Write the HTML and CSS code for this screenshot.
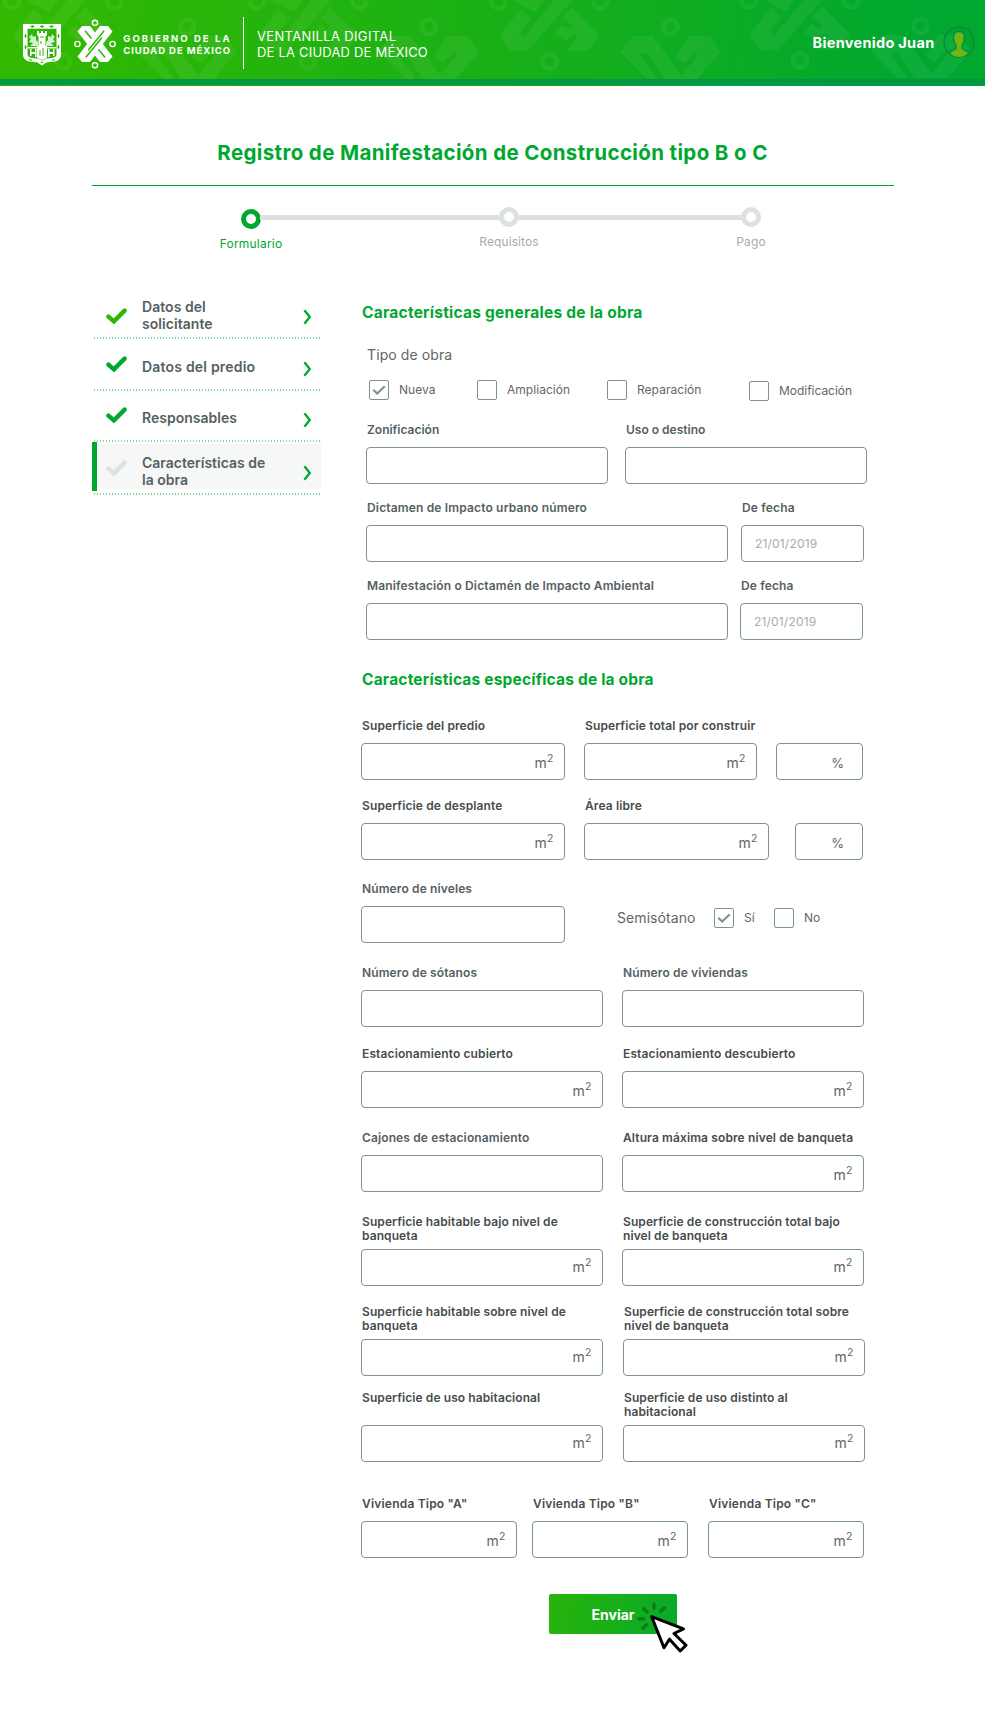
FILE: index.html
```
<!DOCTYPE html>
<html lang="es">
<head>
<meta charset="utf-8">
<title>Registro de Manifestación de Construcción tipo B o C</title>
<link rel="stylesheet" href="styles.css">
</head>
<body>
<svg class="defs" width="0" height="0" aria-hidden="true">
  <defs>
    <mask id="weave" maskUnits="userSpaceOnUse" x="-24" y="-26" width="48" height="52">
      <rect x="-24" y="-26" width="48" height="52" fill="#fff"/>
      <g stroke="#000" stroke-width="1.6" stroke-linecap="round" fill="none">
        <path d="M8.7-12.800-6.400 5.800"/>
        <path d="M-8.700 12.800 6.400-5.800"/>
        <path d="M-9.500-12.800-3.800-5.800"/>
        <path d="M9.500 12.800 3.800 5.800"/>
      </g>
    </mask>
    <symbol id="cdmx" viewBox="-24 -26 48 52" overflow="visible">
      <path mask="url(#weave)" fill="currentColor" d="M-13-18h8L0-11.500 5-18h8l4.500 5.500L7.800 0l9.700 12.500L13 18H5L0 11.500-5 18h-8l-4.500-5.500L-7.800 0l-9.700-12.500z"/>
      <g fill="none" stroke="currentColor" stroke-width="1.400">
        <circle cy="-21.200" r="2.600"/><circle cy="21.200" r="2.600"/><circle cx="-17.600" r="2.600"/><circle cx="17.600" r="2.600"/>
      </g>
    </symbol>
    <g id="motif-top">
      <path d="M-50 35-29 9-19 19-29 31Q-31 38-24 35L4 0H23L-22 51H-40z"/>
      <path d="M-38 0-14 12-5 0z"/>
      <path d="M22 7 50 35 38 51H17L27 40Q29 33 23 35L17 41 4 34 12 25 20 30 23 26 13 18z"/>
      <g fill="none" stroke="#fff" stroke-width="4.500">
        <circle cx="-51" cy="1" r="7.200"/><circle cx="51" cy="1" r="7.200"/><circle cy="61.500" r="7.200"/>
      </g>
    </g>
    <g id="motif-bottom">
      <path d="M-38 36H-18L14 79H-6L-22 55Q-26 50-30 56L-14 77-16 79H-23L-50 52z"/>
      <path d="M18 36H39L50 52 27 79H8L26 57Q28 51 23 54L14 63 5 57z"/>
      <circle cy="27" r="7.200" fill="none" stroke="#fff" stroke-width="4.500"/>
    </g>
    <symbol id="tick" viewBox="0 0 21 16">
      <path d="M2.400 8.600 7.900 13.400 18.600 2.600" fill="none" stroke="currentColor" stroke-width="4.400" stroke-linecap="round" stroke-linejoin="miter"/>
    </symbol>
    <symbol id="chevron" viewBox="0 0 9 16">
      <path d="M1.400 1.200 6.800 8 1.400 14.800" fill="none" stroke="currentColor" stroke-width="2.300"/>
    </symbol>
  </defs>
</svg>

<header class="header">
  <svg class="pattern" width="985" height="86" aria-hidden="true">
    <g class="motifs">
      <use href="#motif-top" x="63"/>
      <use href="#motif-top" x="308"/>
      <use href="#motif-top" x="549.500"/>
      <use href="#motif-top" x="800" y="-1"/>
      <use href="#motif-bottom" x="187"/>
      <use href="#motif-bottom" x="429"/>
      <use href="#motif-bottom" x="670.500"/>
      <use href="#motif-bottom" x="920.500" y="-1"/>
    </g>
  </svg>
  <svg class="shield" width="38" height="42" viewBox="0 0 38 42">
    <path d="M0 0h38v31q0 5-6 6.400l-8 .8L19 41.500 14 38.200l-8-.8Q0 36 0 31z" fill="#fff"/>
    <path d="M4.500 4.800h29V30q0 3.200-3.500 3.800l-7 .9-4 1.800-4-1.800-7-.9Q4.500 33.200 4.500 30z" fill="#2fb505"/>
    <g fill="#fff">
      <path d="M14 7h2v2h2V7h2v2h2V7h2v4l-1.500 1.500V22H24v12l-5 2-5-2V22h1.500v-9.500L14 11z"/>
      <path d="M6 13l3-3 1 3 3-1v4l2 2v4H7l3-3-4-1 2-3zM32 13l-3-3-1 3-3-1v4l-2 2v4h8l-3-3 4-1-2-3z" opacity=".8"/>
      <path d="M5 23h9v1.500H5zM24 23h9v1.500h-9zM7 25h1.500v3H12v-3h1.500v8H12v-3H8.500v2H7zM25 25h1.500v3H30v-3h1.500v7H30v-2h-3.500v3H25z"/>
    </g>
    <g stroke="#2fb505" fill="none" stroke-width="1">
      <path d="M7.500 2.500h4M17 2.500h4M26.500 2.500h4M2.500 10v4M2.500 21v4M35.500 10v4M35.500 21v4M6 35.500l3 .8M17.500 38.200h3M29 36.300l3-.8M17 13h4M18 17v3M20 24v8M17 26v6"/>
    </g>
    <g fill="#2fb505"><circle cx="9.500" cy="2.500" r="1.200"/><circle cx="19" cy="2.500" r="1.200"/><circle cx="28.500" cy="2.500" r="1.200"/><circle cx="2.500" cy="12" r="1.100"/><circle cx="35.500" cy="12" r="1.100"/><circle cx="2.500" cy="23" r="1.100"/><circle cx="35.500" cy="23" r="1.100"/></g>
  </svg>
  <svg class="emblem" width="48" height="52"><use href="#cdmx" width="48" height="52"/></svg>
  <div class="gov"><div class="gov-a">GOBIERNO DE LA</div><div class="gov-b">CIUDAD DE MÉXICO</div></div>
  <div class="divider"></div>
  <div class="product"><div class="product-a">VENTANILLA DIGITAL</div><div class="product-b">DE LA CIUDAD DE MÉXICO</div></div>
  <div class="welcome">Bienvenido Juan</div>
  <svg class="avatar" width="32" height="32" viewBox="0 0 32 32">
    <circle cx="16" cy="16" r="15" fill="none" stroke="#078c3c" stroke-width="1.500"/>
    <path d="M16 5c-4.500 0-6 2.500-5.500 7 0 3 .5 5 2.200 7v3.500L6.500 25.500M16 5c4.500 0 6 2.500 5.500 7 0 3-.5 5-2.200 7v3.500l6.200 3" fill="none" stroke="#078c3c" stroke-width="1.300"/>
    <path d="M16 6.500c-4 0-5 1.800-4.500 6 .2 3.200.8 4.500 2.200 6v4.500l-6.500 4.500q4 3.500 8.800 3.500t8.800-3.500L18.300 23v-4.500c1.400-1.500 2-2.800 2.200-6 .5-4.200-.5-6-4.500-6z" fill="#6fb516"/>
  </svg>
</header>

<main class="page">
  <h1 class="title">Registro de Manifestación de Construcción tipo B o C</h1>

  <div class="steps">
    <div class="step step-on"><span class="dot"></span><span class="step-name">Formulario</span></div>
    <div class="bar bar-a"></div>
    <div class="step"><span class="dot"></span><span class="step-name">Requisitos</span></div>
    <div class="bar bar-b"></div>
    <div class="step"><span class="dot"></span><span class="step-name">Pago</span></div>
  </div>

  <div class="columns">
    <nav class="side">
      <a class="item item-1"><svg class="tick" width="21" height="16"><use href="#tick"/></svg><span>Datos del<br>solicitante</span><svg class="chev" width="9" height="16"><use href="#chevron"/></svg></a>
      <a class="item item-2"><svg class="tick" width="21" height="16"><use href="#tick"/></svg><span>Datos del predio</span><svg class="chev" width="9" height="16"><use href="#chevron"/></svg></a>
      <a class="item item-3"><svg class="tick" width="21" height="16"><use href="#tick"/></svg><span>Responsables</span><svg class="chev" width="9" height="16"><use href="#chevron"/></svg></a>
      <a class="item item-4"><svg class="tick" width="21" height="16"><use href="#tick"/></svg><span>Características de<br>la obra</span><svg class="chev" width="9" height="16"><use href="#chevron"/></svg></a>
    </nav>

    <form class="form">
      <h2 class="heading">Características generales de la obra</h2>
      <section class="general">
        <div class="legend">Tipo de obra</div>
        <div class="checks">
          <div class="check"><span class="box"><svg width="14" height="10" viewBox="0 0 14 10"><path d="M1.200 4.800 5.200 8.500 12.800 1.200" fill="none" stroke="#7b9492" stroke-width="2.100"/></svg></span>Nueva</div>
          <div class="check"><span class="box"></span>Ampliación</div>
          <div class="check"><span class="box"></span>Reparación</div>
          <div class="check check-low"><span class="box"></span>Modificación</div>
        </div>
        <div class="row c-halves">
          <div class="field"><label>Zonificación</label><div class="input"></div></div>
          <div class="field"><label>Uso o destino</label><div class="input"></div></div>
        </div>
        <div class="row c-date-a">
          <div class="field"><label>Dictamen de Impacto urbano número</label><div class="input"></div></div>
          <div class="field"><label>De fecha</label><div class="input date">21/01/2019</div></div>
        </div>
        <div class="row c-date-b">
          <div class="field"><label>Manifestación o Dictamén de Impacto Ambiental</label><div class="input"></div></div>
          <div class="field"><label>De fecha</label><div class="input date">21/01/2019</div></div>
        </div>
      </section>

      <h2 class="heading heading-2">Características específicas de la obra</h2>
      <section class="specific">
        <div class="row dark c-built">
          <div class="field"><label>Superficie del predio</label><div class="input unit">m<sup>2</sup></div></div>
          <div class="field"><label>Superficie total por construir</label><div class="input unit">m<sup>2</sup></div></div>
          <div class="field end"><div class="input pct">%</div></div>
        </div>
        <div class="row dark c-free">
          <div class="field"><label>Superficie de desplante</label><div class="input unit">m<sup>2</sup></div></div>
          <div class="field"><label>Área libre</label><div class="input unit">m<sup>2</sup></div></div>
          <div class="field end"><div class="input pct">%</div></div>
        </div>
        <div class="row c-levels">
          <div class="field"><label>Número de niveles</label><div class="input"></div></div>
          <div class="semi">
            <span class="semi-name">Semisótano</span>
            <div class="check"><span class="box"><svg width="14" height="10" viewBox="0 0 14 10"><path d="M1.200 4.800 5.200 8.500 12.800 1.200" fill="none" stroke="#7b9492" stroke-width="2.100"/></svg></span>Sí</div>
            <div class="check"><span class="box"></span>No</div>
          </div>
        </div>
        <div class="row c-pair gap-23">
          <div class="field"><label>Número de sótanos</label><div class="input"></div></div>
          <div class="field"><label>Número de viviendas</label><div class="input"></div></div>
        </div>
        <div class="row dark c-pair gap-20">
          <div class="field"><label>Estacionamiento cubierto</label><div class="input unit">m<sup>2</sup></div></div>
          <div class="field"><label>Estacionamiento descubierto</label><div class="input unit">m<sup>2</sup></div></div>
        </div>
        <div class="row c-pair gap-23">
          <div class="field"><label>Cajones de estacionamiento</label><div class="input"></div></div>
          <div class="field dark"><label>Altura máxima sobre nivel de banqueta</label><div class="input unit">m<sup>2</sup></div></div>
        </div>
        <div class="row dark tall c-pair gap-23">
          <div class="field"><label>Superficie habitable bajo nivel de<br>banqueta</label><div class="input unit">m<sup>2</sup></div></div>
          <div class="field"><label>Superficie de construcción total bajo<br>nivel de banqueta</label><div class="input unit">m<sup>2</sup></div></div>
        </div>
        <div class="row dark tall c-pair-wide gap-19">
          <div class="field"><label>Superficie habitable sobre nivel de<br>banqueta</label><div class="input unit">m<sup>2</sup></div></div>
          <div class="field"><label>Superficie de construcción total sobre<br>nivel de banqueta</label><div class="input unit">m<sup>2</sup></div></div>
        </div>
        <div class="row dark tall c-pair-wide gap-15">
          <div class="field"><label>Superficie de uso habitacional</label><div class="input unit">m<sup>2</sup></div></div>
          <div class="field"><label>Superficie de uso distinto al<br>habitacional</label><div class="input unit">m<sup>2</sup></div></div>
        </div>
        <div class="row dark c-triple">
          <div class="field"><label>Vivienda Tipo "A"</label><div class="input unit">m<sup>2</sup></div></div>
          <div class="field"><label>Vivienda Tipo "B"</label><div class="input unit">m<sup>2</sup></div></div>
          <div class="field"><label>Vivienda Tipo "C"</label><div class="input unit">m<sup>2</sup></div></div>
        </div>
      </section>

      <button class="send" type="button">Enviar
        <svg class="cursor" width="52" height="54" viewBox="0 0 52 54">
          <g stroke="#0b7c19" stroke-width="3.400" stroke-linecap="round">
            <path d="M17 5v4.500M6.700 9.700 10 13M27.500 8.700 23.700 12.300M1.900 19.700H6.500M9.500 25.800 5.700 29.400"/>
          </g>
          <path d="M14.600 17.600 46.500 29.800 37 34.500 49 46.200 43.200 52 32.500 40.200 27 48.800z" fill="#fff" stroke="#000" stroke-width="3" stroke-linejoin="round"/>
        </svg>
      </button>
    </form>
  </div>
</main>
</body>
</html>
```

FILE: styles.css
```
* { box-sizing: border-box; }
body {
  margin: 0;
  width: 985px;
  min-height: 1731px;
  background: #fff;
  font-family: "Inter", "Open Sans", sans-serif;
  color: #535b5b;
}
.defs { position: absolute; }

/* Header */
.header {
  position: relative;
  display: flex;
  align-items: flex-start;
  height: 86px;
  background: linear-gradient(100deg, #33b900 0%, #19b016 50%, #00a82f 92%);
  color: #fff;
  overflow: hidden;
}
.header::after {
  content: "";
  position: absolute;
  left: 0; right: 0; top: 79px;
  height: 6px;
  background: #009845;
}
.pattern { position: absolute; left: 0; top: 0; }
.motifs { fill: #fff; opacity: .055; }
.shield, .emblem, .gov, .divider, .product, .welcome, .avatar { position: relative; flex: none; }
.shield { margin: 24px 0 0 23px; }
.emblem { margin: 18px 0 0 9.700px; overflow: visible; }
.gov { margin: 32.500px 0 0 4.600px; width: 119.700px; font-weight: 700; font-size: 9.500px; line-height: 12.400px; white-space: nowrap; }
.gov-a { letter-spacing: 2.050px; }
.gov-b { letter-spacing: .93px; }
.divider { margin-top: 17px; width: 1px; height: 52px; background: #fff; }
.product { margin: 28px 0 0 13px; font-weight: 400; font-size: 13px; line-height: 16px; white-space: nowrap; }
.product-a { letter-spacing: .35px; }
.product-b { letter-spacing: .2px; }
.welcome { margin: 34px 8.500px 0 auto; font-weight: 700; font-size: 14.500px; line-height: 18px; letter-spacing: .3px; }
.avatar { margin: 26px 10px 0 0; }

/* Title */
.title {
  margin: 0 0 0 92px;
  padding-top: 54px;
  width: 802px;
  height: 100px;
  border-bottom: 1px solid #00a82f;
  text-align: center;
  font-size: 20.500px;
  font-weight: 700;
  line-height: 26px;
  letter-spacing: .37px;
  text-indent: -1px;
  color: #00a82f;
}

/* Progress */
.steps { display: flex; margin: 21px 0 0 241px; height: 79px; }
.step { display: flex; flex-direction: column; align-items: center; width: 20px; color: #a4adad; font-size: 12px; font-weight: 400; line-height: 16px; letter-spacing: .1px; }
.dot { flex: none; width: 20px; height: 20px; border: 5px solid #dde1e1; border-radius: 50%; }
.step-name { margin-top: 7px; white-space: nowrap; }
.step-on { padding-top: 2px; color: #00a82f; font-weight: 400; letter-spacing: .2px; }
.step-on .dot { border-color: #00a82f; }
.bar { height: 5px; margin: 8px -1px 0; background: #dde1e1; }
.bar-a { width: 240px; }
.bar-b { width: 224px; }

/* Side navigation */
.columns { display: flex; }
.side { margin-left: 92px; width: 229px; }
.item {
  display: grid;
  grid-template-columns: 36px 161px 9px;
  align-items: start;
  padding-left: 14px;
  font-size: 14px;
  font-weight: 600;
  line-height: 17px;
  letter-spacing: .2px;
  color: #56605f;
  background: repeating-linear-gradient(90deg, #7fd696 0 1.500px, transparent 1.500px 3px) 2px 100% / 227px 2px no-repeat;
}
.item span { margin-top: -1px; }
.tick { color: #00a82f; }
.chev { color: #00a82f; }
.item-1 { height: 53px; letter-spacing: .05px; }
.item-1 span { padding-top: 12.500px; }
.item-1 .tick { margin-top: 22px; color: #2fb800; }
.item-1 .chev { margin-top: 23px; }
.item-2 { height: 52px; }
.item-2 span { padding-top: 19.500px; }
.item-2 .tick { margin-top: 17px; }
.item-2 .chev { margin-top: 22px; }
.item-3 { height: 51px; letter-spacing: 0; }
.item-3 span { padding-top: 19px; }
.item-3 .tick { margin-top: 16px; }
.item-3 .chev { margin-top: 21px; }
.item-4 {
  height: 53px;
  letter-spacing: 0;
  background:
    linear-gradient(#00a82f, #00a82f) 0 0 / 5px 49px no-repeat,
    linear-gradient(#f6f8f8, #f6f8f8) 6px 1px / 223px 46px no-repeat,
    repeating-linear-gradient(90deg, #7fd696 0 1.500px, transparent 1.500px 3px) 2px 100% / 227px 2px no-repeat;
}
.item-4 span { padding-top: 12.500px; }
.item-4 .tick { margin-top: 18px; color: #dde1e1; }
.item-4 .chev { margin-top: 23px; }

/* Form */
.form { margin-left: 40px; padding-top: 16.500px; }
.heading { margin: 0 0 0 1px; font-size: 15.500px; font-weight: 700; line-height: 20px; letter-spacing: .24px; color: #00a82f; }
.heading-2 { margin-top: 29.500px; letter-spacing: .19px; }
.general { padding: 23.500px 0 0 5px; }
.legend { height: 34px; padding-left: 1px; font-size: 14px; line-height: 18px; color: #5f6767; letter-spacing: .1px; }
.checks { display: grid; grid-template-columns: 108px 130px 142px auto; height: 43px; padding-left: 3px; align-items: start; }
.check { display: flex; gap: 10px; font-size: 12px; line-height: 20px; color: #5f6767; letter-spacing: .04px; }
.check-low { padding-top: 1px; letter-spacing: -.03px; }
.box { display: flex; align-items: center; justify-content: center; width: 20px; height: 20px; border: 1px solid #7b9492; border-radius: 2px; }

.row { display: grid; }
.field { display: flex; flex-direction: column; color: #56605f; }
.dark, .dark .field { color: #474c4c; }
.end { justify-content: flex-end; }
label { height: 24px; padding-left: 1px; font-size: 12px; font-weight: 600; line-height: 14px; letter-spacing: .12px; white-space: nowrap; }
.tall label { height: 34px; letter-spacing: .09px; }
.input { height: 37px; border: 1px solid #7b9492; border-radius: 4px; font-size: 14px; line-height: 18px; color: #5f6767; }
.date { padding: 9px 0 0 13px; font-size: 12px; letter-spacing: .18px; color: #a4adad; }
.unit { display: flex; justify-content: flex-end; padding: 10px 10.500px 0 0; }
.tall .unit { padding-top: 8px; }
.unit sup { margin: -2.500px 0 0 .3px; font-size: 10.500px; line-height: 14px; }
.pct { padding: 10px 18px 0 0; text-align: right; font-size: 13px; }

.c-halves { grid-template-columns: 242px 242px; column-gap: 17px; }
.c-halves label { letter-spacing: 0; }
.c-date-a { grid-template-columns: 362px 123px; column-gap: 13px; margin-top: 17px; }
.c-date-a label { letter-spacing: .16px; }
.c-date-b { grid-template-columns: 362px 123px; column-gap: 12px; margin-top: 17px; }
.c-date-b label { letter-spacing: .14px; }
.specific { padding-top: 29.500px; }
.c-built { grid-template-columns: 204px 173px 87px; column-gap: 19px; }
.c-free { grid-template-columns: 204px 185px 68px; column-gap: 19px; margin-top: 19px; }
.c-free .end { margin-left: 7px; width: 68px; }
.c-levels { grid-template-columns: 204px auto; column-gap: 52px; margin-top: 22px; }
.semi { display: flex; padding-top: 26px; }
.semi-name { width: 97px; font-size: 14px; line-height: 19px; letter-spacing: .08px; color: #5f6767; }
.semi .check { width: 60px; }
.c-pair { grid-template-columns: 242px 242px; column-gap: 19px; }
.c-pair-wide { grid-template-columns: 242px 242px; column-gap: 20px; }
.c-triple { grid-template-columns: 156px 156px 156px; column-gap: 15px; margin-top: 35px; }
.c-triple label { letter-spacing: .2px; }
.c-triple .field:last-child { margin: 0 -5px 0 5px; }
.gap-23 { margin-top: 23px; }
.gap-20 { margin-top: 20px; }
.gap-19 { margin-top: 19px; }
.gap-15 { margin-top: 15px; }

.send {
  position: relative;
  display: block;
  width: 128px;
  height: 40px;
  margin: 36px 0 0 188px;
  padding: 0;
  border: 0;
  border-radius: 2px;
  background: linear-gradient(100deg, #28b40a, #08aa2a);
  color: #fff;
  font: 700 14px/42px "Inter", sans-serif;
}
.cursor { position: absolute; left: 88px; top: 5px; }
```
